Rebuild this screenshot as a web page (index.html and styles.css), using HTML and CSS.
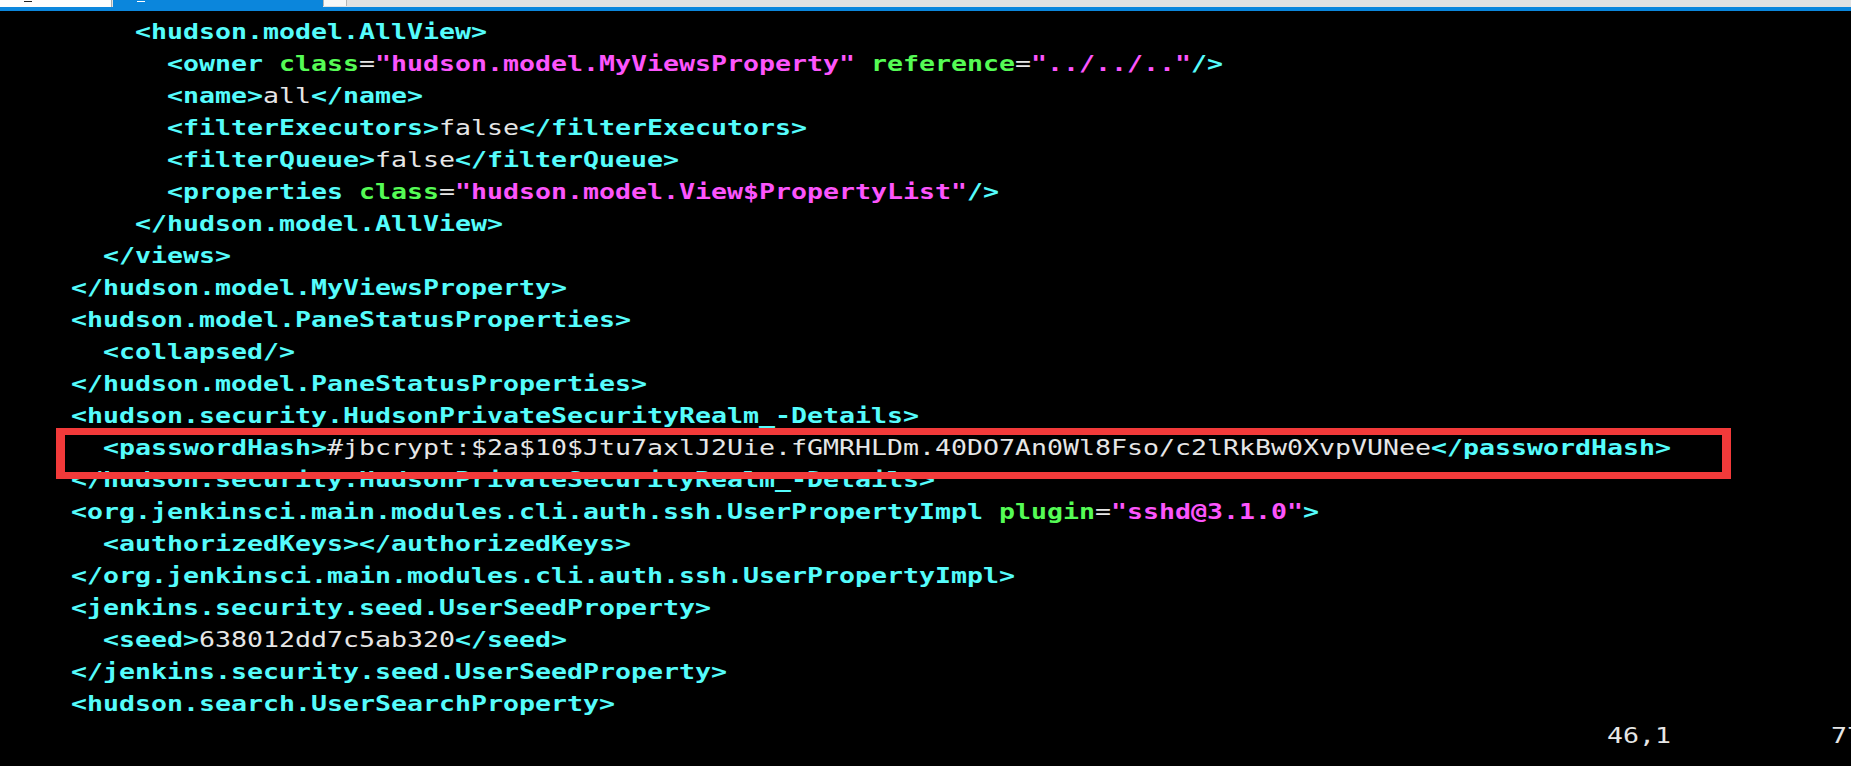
FILE: index.html
```html
<!DOCTYPE html>
<html>
<head>
<meta charset="utf-8">
<link rel="stylesheet" href="styles.css">
</head>
<body>
<div class="app">
  <div class="tabbar">
    <div class="tab tab-a"><span class="dash dash-dark"></span></div>
    <div class="tab tab-b"><span class="dash dash-light"></span></div>
    <div class="tab-c"></div>
  </div>
  <div class="rule"></div>
  <div class="term">
<pre class="code"><span class="t">        &lt;hudson.model.AllView&gt;</span>
<span class="t">          &lt;owner </span><span class="a">class</span><span class="e">=</span><span class="s">"hudson.model.MyViewsProperty"</span><span class="t"> </span><span class="a">reference</span><span class="e">=</span><span class="s">"../../.."</span><span class="t">/&gt;</span>
<span class="t">          &lt;name&gt;</span><span class="x">all</span><span class="t">&lt;/name&gt;</span>
<span class="t">          &lt;filterExecutors&gt;</span><span class="x">false</span><span class="t">&lt;/filterExecutors&gt;</span>
<span class="t">          &lt;filterQueue&gt;</span><span class="x">false</span><span class="t">&lt;/filterQueue&gt;</span>
<span class="t">          &lt;properties </span><span class="a">class</span><span class="e">=</span><span class="s">"hudson.model.View$PropertyList"</span><span class="t">/&gt;</span>
<span class="t">        &lt;/hudson.model.AllView&gt;</span>
<span class="t">      &lt;/views&gt;</span>
<span class="t">    &lt;/hudson.model.MyViewsProperty&gt;</span>
<span class="t">    &lt;hudson.model.PaneStatusProperties&gt;</span>
<span class="t">      &lt;collapsed/&gt;</span>
<span class="t">    &lt;/hudson.model.PaneStatusProperties&gt;</span>
<span class="t">    &lt;hudson.security.HudsonPrivateSecurityRealm_-Details&gt;</span>
<span class="t">      &lt;passwordHash&gt;</span><span class="x">#jbcrypt:$2a$10$Jtu7axlJ2Uie.fGMRHLDm.40DO7An0Wl8Fso/c2lRkBw0XvpVUNee</span><span class="t">&lt;/passwordHash&gt;</span>
<span class="t">    &lt;/hudson.security.HudsonPrivateSecurityRealm_-Details&gt;</span>
<span class="t">    &lt;org.jenkinsci.main.modules.cli.auth.ssh.UserPropertyImpl </span><span class="a">plugin</span><span class="e">=</span><span class="s">"sshd@3.1.0"</span><span class="t">&gt;</span>
<span class="t">      &lt;authorizedKeys&gt;&lt;/authorizedKeys&gt;</span>
<span class="t">    &lt;/org.jenkinsci.main.modules.cli.auth.ssh.UserPropertyImpl&gt;</span>
<span class="t">    &lt;jenkins.security.seed.UserSeedProperty&gt;</span>
<span class="t">      &lt;seed&gt;</span><span class="x">638012dd7c5ab320</span><span class="t">&lt;/seed&gt;</span>
<span class="t">    &lt;/jenkins.security.seed.UserSeedProperty&gt;</span>
<span class="t">    &lt;hudson.search.UserSearchProperty&gt;</span>
<span class="x">                                                                                                    46,1          77%</span></pre>
    <div class="mark"></div>
  </div>
</div>
</body>
</html>
```
FILE: styles.css
```css
html, body {
  margin: 0;
  padding: 0;
  background: #000;
  overflow: hidden;
}

.app {
  width: 1851px;
  height: 766px;
  display: flex;
  flex-direction: column;
  background: #000;
}

.tabbar {
  height: 7px;
  display: flex;
  background: #e2e2e2;
}

.tab {
  height: 7px;
  position: relative;
}

.tab-a {
  width: 111px;
  background: #fdfdfd;
  border-right: 1px solid #a9a9a9;
}

.tab-b {
  width: 210px;
  margin-left: 1px;
  background: #0b86dc;
}

.tab-c {
  width: 22px;
  height: 6px;
  background: #f7f7f7;
  border-left: 1px solid #b5b5b5;
  border-right: 1px solid #b5b5b5;
}

.dash {
  position: absolute;
  top: 1px;
  height: 1px;
  width: 8px;
}

.dash-dark {
  left: 24px;
  background: #222;
}

.dash-light {
  left: 24px;
  background: #fff;
}

.rule {
  height: 4px;
  background: #0b86dc;
}

.term {
  position: relative;
  flex: 1;
  padding-top: 5px;
  overflow: hidden;
}

.code {
  margin: 0 0 0 7px;
  font-family: "DejaVu Sans Mono", monospace;
  font-size: 22px;
  line-height: 32px;
  transform-origin: 0 0;
  transform: scaleX(1.208);
  white-space: pre;
  color: #e6e6e6;
}

.t {
  color: #55fcfc;
  font-weight: bold;
}

.a {
  color: #55fc55;
  font-weight: bold;
}

.s {
  color: #fc55fc;
  font-weight: bold;
}

.e {
  color: #e6e6e6;
}

.x {
  color: #e6e6e6;
}

.mark {
  position: absolute;
  left: 56px;
  top: 417px;
  width: 1657px;
  height: 37px;
  border: 7px solid #f23a3a;
  border-left-width: 9px;
  border-right-width: 9px;
}
```
